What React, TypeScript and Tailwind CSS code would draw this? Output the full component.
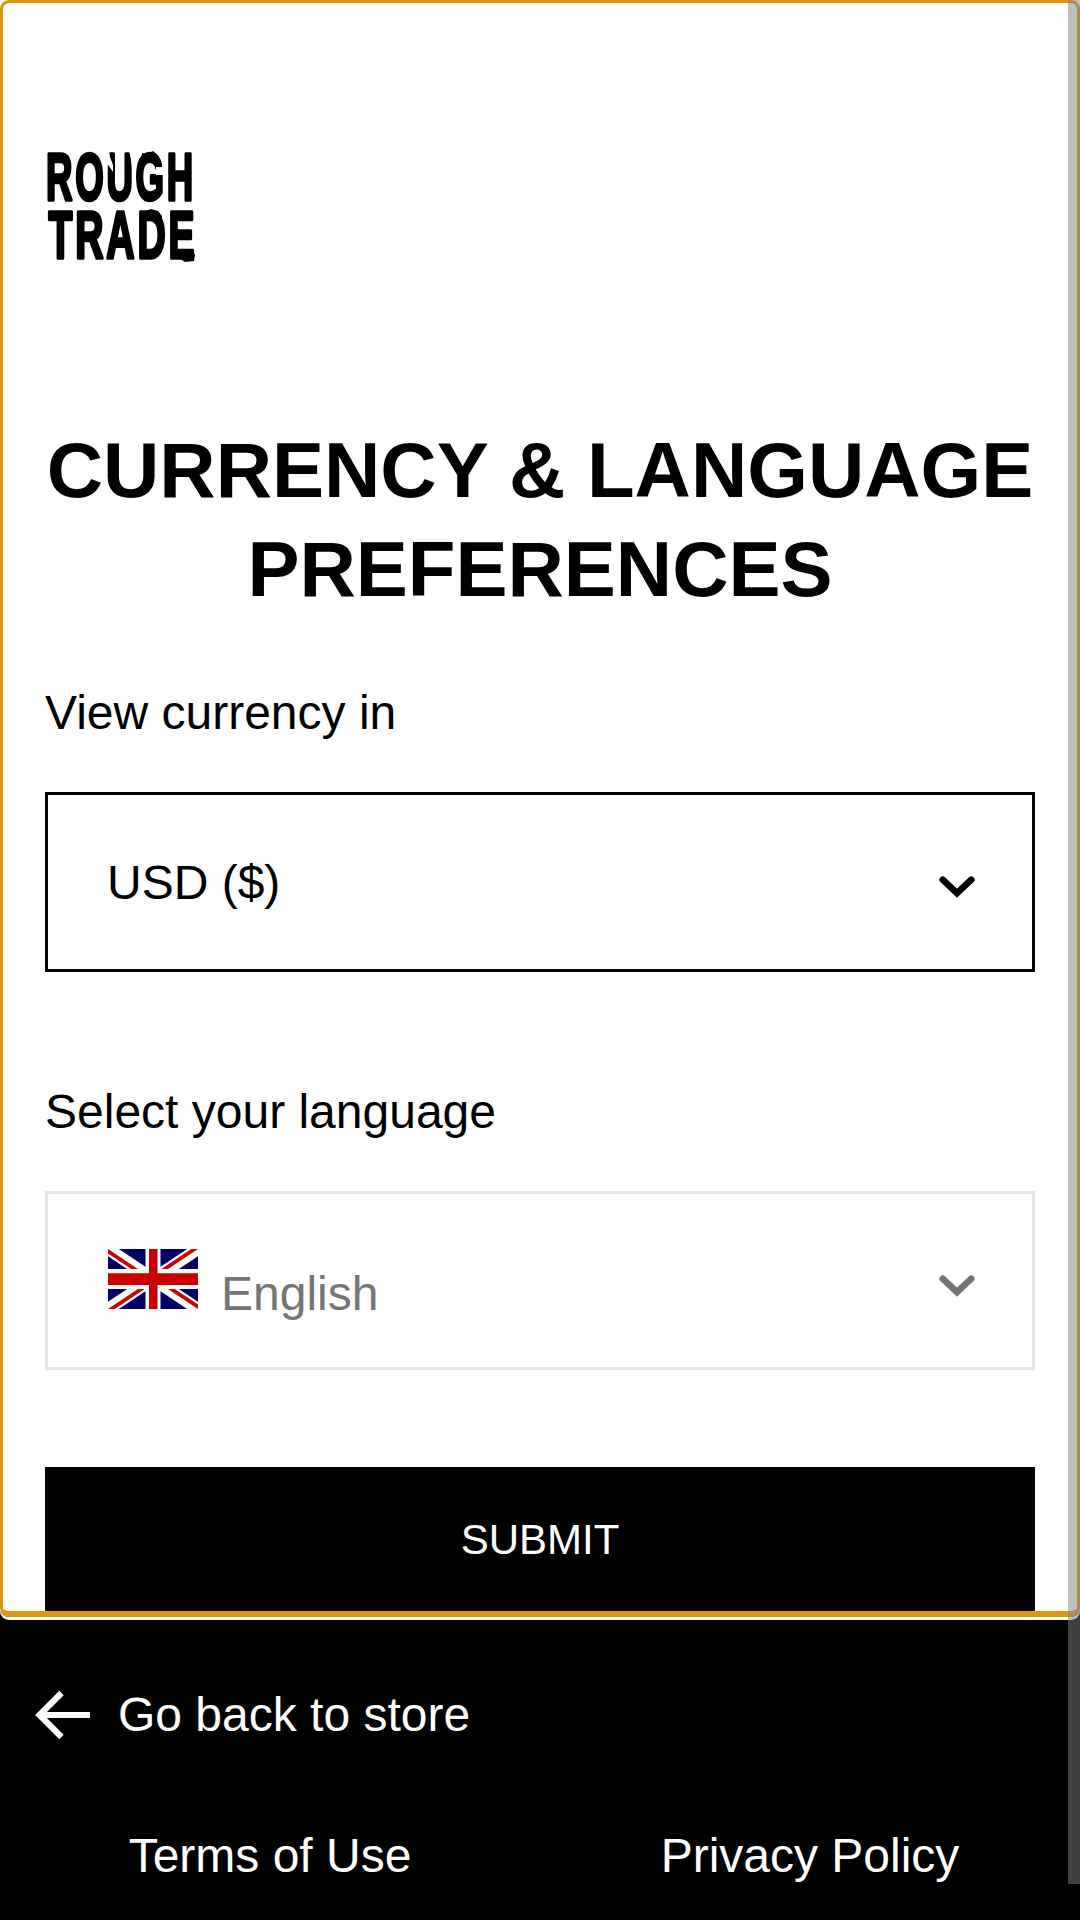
import React from "react";

function Logo() {
  return (
    <svg width="156" height="118" viewBox="0 -4 156 118" className="-mt-1 block overflow-visible" role="img" aria-label="Rough Trade">
      <g
        fill="#000"
        stroke="#000"
        strokeWidth="3.6"
        strokeLinejoin="round"
        fontFamily="'Liberation Sans Narrow', 'Liberation Sans', Arial, sans-serif"
        fontWeight="700"
        fontSize="67"
        letterSpacing="5"
      >
        <text x="1" y="50" textLength="150" lengthAdjust="spacingAndGlyphs">ROUGH</text>
        <text x="3.5" y="108" textLength="149" lengthAdjust="spacingAndGlyphs">TRADE</text>
      </g>
      {/* Worn edges of the stamp lettering */}
      <g fill="#fff">
        <path d="M60 0h4l1 7 3 8 0 7-4-6-3-3z" />
        <path d="M84 0h6l-1 9-2 9-1-8z" />
        <path d="M111 17l9 0-1 3 3 2-3 3-8 0z" />
        <path d="M92 0h5l3 3-5 1-3 3z" />
      </g>
      <g fill="#000">
        <path d="M97 3l6 1 5-3 6 6-3 3H96z" />
        <path d="M128 101l6 2 4 2 10-3 2 3-1 6-9 1-6-4-6-2z" />
        <path d="M99 62l7-3 7 2 4 5v4l-18-2z" />
      </g>
    </svg>
  );
}

function Chevron() {
  return (
    <svg width="36" height="22" viewBox="0 0 36 22" fill="none" className="mt-[11px] -mr-[3px] block">
      <path d="M3.7 3.7 18 17.2 32.3 3.7" stroke="currentColor" strokeWidth="6.6" strokeLinecap="round" />
    </svg>
  );
}

function Flag() {
  return (
    <svg width="90" height="60" viewBox="0 0 90 60" className="-mt-px block">
      <path fill="#006" d="M0 0h90v60H0z" />
      <path stroke="#fff" strokeWidth="12" d="m0 0 90 60M90 0 0 60" />
      <path
        fill="#c00"
        d="M0 0 30 20H23.3L0 4.5ZM90 0H83.3L53.3 20H60L90 0ZM0 60H6.7L36.7 40H30L0 60ZM90 60 60 40H66.7L90 55.5Z"
      />
      <path fill="#fff" d="M37.5 0h15v60h-15zM0 20h90v20H0z" />
      <path fill="#c00" d="M41 0h8.5v60H41zM0 24.3h90v11.8H0z" />
    </svg>
  );
}

export default function App() {
  return (
    <div className="relative flex h-[1920px] w-[1080px] flex-col overflow-hidden bg-black font-['Liberation_Sans',Arial,sans-serif] text-[48px] leading-[60px] text-black">
      <main className="relative flex h-[1611px] shrink-0 flex-col bg-white px-[45px] pt-[150px]">
        <Logo />
        <h1 className="mt-[157px] text-center text-[78px] leading-[99px] font-bold whitespace-nowrap">
          CURRENCY &amp; LANGUAGE
          <br />
          PREFERENCES
        </h1>
        <label className="mt-[64px]">View currency in</label>
        <button className="mt-[49px] flex h-[180px] items-center justify-between border-[3px] border-black px-[60px]">
          <span className="mt-[2px] -ml-px">USD ($)</span>
          <Chevron />
        </button>
        <label className="mt-[110px]">Select your language</label>
        <button className="mt-[49px] flex h-[180px] items-center justify-between border-[3px] border-[#e6e6e6] px-[60px] text-[#757575]">
          <span className="mt-[13px] flex items-start gap-[23px]">
            <Flag />
            <span className="mt-[14px]">English</span>
          </span>
          <Chevron />
        </button>
        <button className="mt-[97px] h-[144px] bg-black pt-[2px] text-[42px] text-white">SUBMIT</button>
        <div className="pointer-events-none absolute inset-x-0 top-0 h-[1617px] rounded-[9px] border-[3px] border-b-[6px] border-[#e0960a] shadow-[0_3px_0_#fff]" />
      </main>
      <footer className="flex flex-1 flex-col pt-[74px] text-white">
        <a className="flex items-center gap-[27px] pl-[35px]">
          <svg width="56" height="50" viewBox="0 0 56 50" fill="none" className="-mt-px block">
            <path d="M55 25H5M26.5 3 4.5 25l22 22" stroke="currentColor" strokeWidth="6.2" />
          </svg>
          <span>Go back to store</span>
        </a>
        <nav className="mt-[81px] grid grid-cols-2 text-center">
          <a>Terms of Use</a>
          <a>Privacy Policy</a>
        </nav>
      </footer>
      <div className="absolute top-0 right-0 h-[1884px] w-[12px] bg-[#808080]/50" />
    </div>
  );
}
